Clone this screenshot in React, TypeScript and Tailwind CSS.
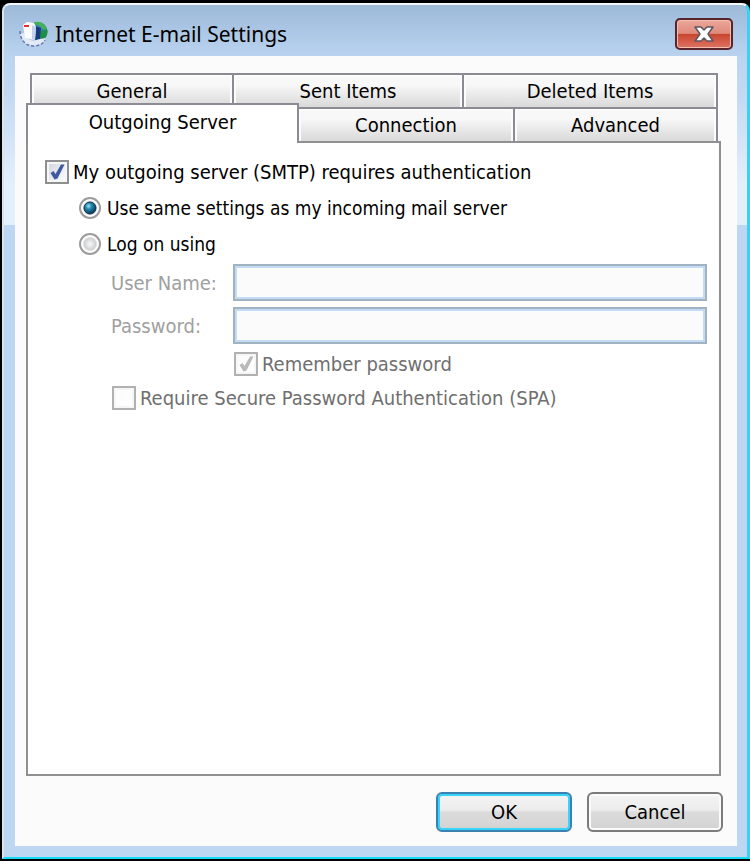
import { useState } from "react";
import type { ReactNode } from "react";

const TAB =
  "flex items-center justify-center border-2 border-[#8b8b93] bg-linear-to-b from-[#f8f8f8] from-30% to-[#d9d9d9] shadow-[inset_2px_2px_0_#fcfcfc,inset_-2px_0_0_#fcfcfc]";

function CheckBox(props: {
  checked: boolean;
  disabled?: boolean;
  onChange?: () => void;
  children: ReactNode;
}) {
  const { checked, disabled, onChange, children } = props;
  return (
    <label className={`flex h-6 items-center gap-1 ${disabled ? "text-[#6f6f6f]" : "text-black"}`}>
      <span className="relative flex size-6 shrink-0">
        <input
          type="checkbox"
          checked={checked}
          disabled={disabled}
          onChange={onChange ?? (() => {})}
          className="size-6 appearance-none border-2 border-[#8e8f8f] bg-linear-to-br from-[#cfd3da] to-white shadow-[inset_0_0_0_2px_#f6f6f6] disabled:border-[#b1b1b1] disabled:from-[#fbfbfb]"
        />
        {checked && (
          <svg viewBox="0 0 24 24" className="pointer-events-none absolute inset-0 size-6" aria-hidden="true">
            <path
              d="M5.500 13 8.500 11 10.500 14 16 4.500 19.500 4.500 12.500 18.500 9.500 19.500Z"
              fill={disabled ? "#b9b9b9" : "#4058a4"}
            />
          </svg>
        )}
      </span>
      <span className="whitespace-nowrap">{children}</span>
    </label>
  );
}

function Radio(props: { checked: boolean; onChange: () => void; children: ReactNode }) {
  return (
    <label className="flex h-6 items-center gap-1.5">
      <span className="relative flex size-[22px] shrink-0">
        <input
          type="radio"
          name="logon"
          checked={props.checked}
          onChange={props.onChange}
          className="size-[22px] appearance-none rounded-full border-2 border-[#9c9c9c] bg-radial from-[#f2f2f2] from-10% via-[#cfd1d3] via-45% to-white to-60%"
        />
        {props.checked && (
          <svg viewBox="0 0 22 22" className="pointer-events-none absolute inset-0 size-[22px]" aria-hidden="true">
            <defs>
              <radialGradient id="bead" cx="0.38" cy="0.34" r="0.65">
                <stop offset="0" stopColor="#9be4f5" />
                <stop offset="0.4" stopColor="#2089b0" />
                <stop offset="1" stopColor="#0b3a5c" />
              </radialGradient>
            </defs>
            <circle cx="11" cy="11" r="6" fill="url(#bead)" stroke="#123249" />
          </svg>
        )}
      </span>
      <span className="whitespace-nowrap text-[19px]">{props.children}</span>
    </label>
  );
}

function MailIcon() {
  return (
    <svg viewBox="0 0 30 30" className="size-[30px] shrink-0" aria-hidden="true">
      <circle cx="19" cy="12.500" r="9.500" fill="#3f7fc4" />
      <path d="M14 4C19 1 26 4 28 10L25 11 22 8 19 6 15 6Z" fill="#43b255" />
      <path d="M22 12 28 10C29.500 15 27 20 22 22L21 17Z" fill="#1f8f45" />
      <path d="M16 7 22 9 21 20 16 21Z" fill="#173c7c" />
      <path d="M1 15 5 14 7 19 14 22 21 20 27 19 23 25 14 27 5 24Z" fill="#e3eaf6" />
      <path d="M1 12C1 22 8 27 14 27 20 27 24 25 26 21" fill="none" stroke="#6078ac" strokeWidth="1.500" strokeDasharray="3 2" />
      <path d="M4 6 8 3 15 4 17 8 16 21 6 19Z" fill="#fafcff" />
      <path d="M13 6 17 8 16 21 13 20Z" fill="#c3d2ec" />
      <path d="M5 6h5v2H5Z" fill="#ee2a2a" />
    </svg>
  );
}

export default function App() {
  const [auth, setAuth] = useState(true);
  const [mode, setMode] = useState("same");

  return (
    <div className="flex min-h-screen flex-col bg-black pt-[3px] pb-[2px] pl-[2px] font-['DejaVu_Sans_Condensed','DejaVu_Sans',sans-serif] text-[20px] leading-6 text-black">
      <div className="flex grow flex-col rounded-t-lg border-t-2 border-r-[3px] border-b-2 border-l-2 border-t-[#f4f8fc] border-r-[#35d2fb] border-b-[#10dcf6] border-l-[#d8e4ee] bg-[linear-gradient(#9dbad9_0px,#bad4f0_52px,#c3d9f2_90px,#e4effc_180px,#e4effc_220px,#bdd7f3_220px)] pr-2.5 pb-[11px] pl-[11px]">
        <header className="flex h-[51px] items-center gap-1.5 pt-1.5 pl-1">
          <MailIcon />
          <h1 className="grow font-['Noto_Sans','Open_Sans',sans-serif] text-[21px]">Internet E-mail Settings</h1>
          <button
            type="button"
            aria-label="Close"
            className="mr-1 mb-1.5 mt-1.5 flex h-8 w-[58px] items-center justify-center rounded-[5px] border-2 border-[#58242b] bg-[linear-gradient(#eba79a,#df8a7c_48%,#c9452f_50%,#dd7463)] shadow-[inset_0_0_0_1px_#f4bdb2]"
          >
            <svg viewBox="0 0 22 18" className="h-[18px] w-[22px]" aria-hidden="true">
              <path
                d="M2 2H8L11 5 14 2H20L15 9 20 16H14L11 13 8 16H2L7 9Z"
                fill="#fff"
                stroke="#5b5660"
                strokeWidth="1.500"
                strokeLinejoin="round"
              />
            </svg>
          </button>
        </header>

        <main className="flex grow flex-col bg-[#fbfbfb] pt-[17px] pr-4 pb-3.5 pl-[11px]">
          <div role="tablist" className="flex flex-col">
            <div className="ml-1 mr-[3px] grid h-[34px] grid-cols-[204fr_230fr_254fr]">
              <button type="button" role="tab" className={`${TAB} border-b-0`}>General</button>
              <button type="button" role="tab" className={`${TAB} border-b-0 border-l-0`}>Sent Items</button>
              <button type="button" role="tab" className={`${TAB} border-b-0 border-l-0`}>Deleted Items</button>
            </div>
            <div className="mr-[3px] grid h-[34px] grid-cols-[273fr_216fr_203fr]">
              <button
                type="button"
                role="tab"
                aria-selected="true"
                className="z-10 -mt-1 -mb-0.5 flex items-center justify-center border-2 border-b-0 border-[#8b8b93] bg-white pb-1"
              >
                Outgoing Server
              </button>
              <button type="button" role="tab" className={`${TAB} border-b-0 border-l-0`}>Connection</button>
              <button type="button" role="tab" className={`${TAB} border-b-0 border-l-0`}>Advanced</button>
            </div>
          </div>

          <section className="flex grow flex-col border-2 border-[#909092] bg-white pt-[17px] pr-3 pb-4 pl-[17px]">
            <CheckBox checked={auth} onChange={() => setAuth(!auth)}>
              My outgoing server (SMTP) requires authentication
            </CheckBox>
            <div className="mt-3 flex flex-col gap-3 pl-[34px]">
              <Radio checked={mode === "same"} onChange={() => setMode("same")}>
                Use same settings as my incoming mail server
              </Radio>
              <Radio checked={mode === "logon"} onChange={() => setMode("logon")}>
                Log on using
              </Radio>
            </div>
            <div className="mt-2 grid grid-cols-[122px_1fr] items-center gap-y-1.5 pl-[66px] text-[#a0a0a0]">
              <label htmlFor="user">User Name:</label>
              <input
                id="user"
                type="text"
                disabled
                className="h-[37px] w-full border-2 border-[#a3b2c1] bg-[#fbfbfb] px-2 shadow-[inset_0_0_0_2px_#c3dcf6]"
              />
              <label htmlFor="pass">Password:</label>
              <input
                id="pass"
                type="password"
                disabled
                className="h-[37px] w-full border-2 border-[#a3b2c1] bg-[#fbfbfb] px-2 shadow-[inset_0_0_0_2px_#c3dcf6]"
              />
            </div>
            <div className="mt-2 pl-[189px]">
              <CheckBox checked disabled>Remember password</CheckBox>
            </div>
            <div className="mt-2.5 pl-[67px]">
              <CheckBox checked={false} disabled>Require Secure Password Authentication (SPA)</CheckBox>
            </div>
          </section>

          <footer className="-mr-0.5 mt-4 flex justify-end gap-[15px]">
            <button
              type="button"
              className="h-10 w-[136px] rounded-md border-2 border-[#3c7fb1] bg-[linear-gradient(#f4f4f4,#ececec_45%,#dcdcdc_50%,#d2d2d2)] shadow-[inset_0_0_0_2px_#35d4f8]"
            >
              OK
            </button>
            <button
              type="button"
              className="h-10 w-[136px] rounded-md border-2 border-[#7c7c7c] bg-[linear-gradient(#f4f4f4,#ececec_45%,#dcdcdc_50%,#d2d2d2)] shadow-[inset_0_0_0_2px_#fafafa]"
            >
              Cancel
            </button>
          </footer>
        </main>
      </div>
    </div>
  );
}
